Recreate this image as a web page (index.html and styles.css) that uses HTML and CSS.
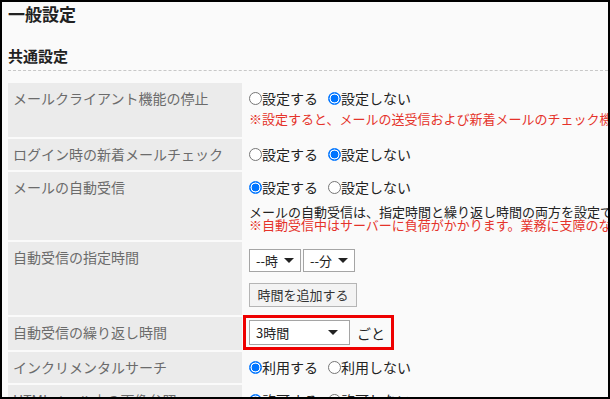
FILE: index.html
```html
<!DOCTYPE html>
<html lang="ja">
<head>
<meta charset="utf-8">
<title>一般設定</title>
<link rel="stylesheet" href="styles.css">
</head>
<body>
<div class="frame">
  <h1 class="title">一般設定</h1>
  <h2 class="section">共通設定</h2>
  <div class="rows">
    <div class="row">
      <div class="label">メールクライアント機能の停止</div>
      <div class="value">
        <div class="opts"><span class="opt"><span class="radio"></span>設定する</span><span class="opt"><span class="radio on"></span>設定しない</span></div>
        <div class="warn warn-single">※設定すると、メールの送受信および新着メールのチェック機能を停止します。</div>
      </div>
    </div>
    <div class="row">
      <div class="label">ログイン時の新着メールチェック</div>
      <div class="value">
        <div class="opts"><span class="opt"><span class="radio"></span>設定する</span><span class="opt"><span class="radio on"></span>設定しない</span></div>
      </div>
    </div>
    <div class="row">
      <div class="label">メールの自動受信</div>
      <div class="value">
        <div class="opts"><span class="opt"><span class="radio on"></span>設定する</span><span class="opt"><span class="radio"></span>設定しない</span></div>
        <div class="desc">
          <div class="note">メールの自動受信は、指定時間と繰り返し時間の両方を設定できます。</div>
          <div class="note red">※自動受信中はサーバーに負荷がかかります。業務に支障のない範囲で設定してください。</div>
        </div>
      </div>
    </div>
    <div class="row">
      <div class="label">自動受信の指定時間</div>
      <div class="value value-time">
        <div class="selects"><span class="sel sel-small">--時<span class="caret"></span></span><span class="sel sel-small">--分<span class="caret"></span></span></div>
        <div class="btn-line"><span class="btn">時間を追加する</span></div>
      </div>
    </div>
    <div class="row">
      <div class="label">自動受信の繰り返し時間</div>
      <div class="value value-repeat">
        <span class="highlight"><span class="sel sel-wide">3時間<span class="caret"></span></span><span class="suffix">ごと</span></span>
      </div>
    </div>
    <div class="row">
      <div class="label">インクリメンタルサーチ</div>
      <div class="value">
        <div class="opts"><span class="opt"><span class="radio on"></span>利用する</span><span class="opt"><span class="radio"></span>利用しない</span></div>
      </div>
    </div>
    <div class="row">
      <div class="label">HTMLメール内の画像参照</div>
      <div class="value">
        <div class="opts"><span class="opt"><span class="radio on"></span>許可する</span><span class="opt"><span class="radio"></span>許可しない</span></div>
      </div>
    </div>
  </div>
</div>
</body>
</html>
```

FILE: styles.css
```css
html, body {
  margin: 0;
  padding: 0;
  overflow: hidden;
  background: #fafafa;
}
body {
  font-family: "Noto Sans CJK JP", "Noto Sans", sans-serif;
  color: #333;
}
.frame {
  box-sizing: border-box;
  width: 610px;
  height: 399px;
  border: 2px solid #000;
  border-right-width: 2px;
  padding: 0 0 0 6px;
  overflow: hidden;
  background: #fafafa;
}
.title {
  margin: 0;
  font-size: 17px;
  line-height: 24px;
  font-weight: bold;
  color: #222;
}
.section {
  margin: 20px 0 0;
  padding: 0 0 4px;
  font-size: 15px;
  line-height: 20px;
  font-weight: bold;
  color: #222;
  border-bottom: 1px dashed #c8c8c8;
}
.rows {
  margin-top: 12px;
  display: flex;
  flex-direction: column;
  gap: 2px;
}
.row {
  display: flex;
  gap: 2px;
}
.label {
  flex: 0 0 234px;
  box-sizing: border-box;
  background: #ebebeb;
  padding: 5px 5px 6px;
  font-size: 14px;
  line-height: 20px;
  color: #6b6b6b;
  white-space: nowrap;
}
.value {
  flex: 1;
  padding: 5px 5px 6px;
  white-space: nowrap;
  color: #222;
}
.opts {
  font-size: 14px;
  line-height: 20px;
}
.opt {
  margin-right: 10px;
}
.radio {
  display: inline-block;
  box-sizing: border-box;
  width: 13px;
  height: 13px;
  border: 1px solid #767676;
  border-radius: 50%;
  background: #fff;
  vertical-align: -1px;
}
.radio.on {
  border-color: #0075ff;
  background: radial-gradient(circle, #0075ff 0 3.6px, #fff 4.2px 4.8px, #0075ff 5.2px);
}
.warn {
  font-size: 13px;
  color: #e5332a;
}
.warn-single {
  margin: 3px 0 4px;
  line-height: 16px;
}
.desc {
  margin: 8px 0 3px;
  font-size: 13px;
  line-height: 13px;
}
.note.red {
  color: #e5332a;
}
.value-time {
  padding: 7px 5px 8px;
}
.selects {
  display: flex;
  gap: 2px;
}
.sel {
  display: inline-flex;
  align-items: center;
  justify-content: space-between;
  box-sizing: border-box;
  background: #fff;
  border: 1px solid #a5a5a5;
  font-size: 13px;
  color: #222;
  padding: 0 6px 0 6px;
}
.sel-small {
  width: 52px;
  height: 23px;
}
.sel-wide {
  width: 101px;
  height: 25px;
  padding-right: 11px;
}
.caret {
  width: 0;
  height: 0;
  border-left: 5px solid transparent;
  border-right: 5px solid transparent;
  border-top: 5px solid #222;
}
.btn-line {
  margin-top: 9px;
}
.btn {
  display: inline-block;
  box-sizing: border-box;
  width: 108px;
  height: 24px;
  line-height: 22px;
  text-align: center;
  background: #f3f3f3;
  border: 1px solid #b5b5b5;
  font-size: 13px;
  color: #333;
}
.value-repeat {
  padding: 2px 5px 5px;
}
.highlight {
  position: relative;
  display: inline-flex;
  align-items: center;
  gap: 7px;
}
.highlight::after {
  content: "";
  position: absolute;
  left: -6px;
  top: -5px;
  right: -9px;
  bottom: -5px;
  border: 3px solid #e60012;
  border-color: #ee0000;
}
.suffix {
  font-size: 14px;
  line-height: 20px;
  color: #222;
}
```
